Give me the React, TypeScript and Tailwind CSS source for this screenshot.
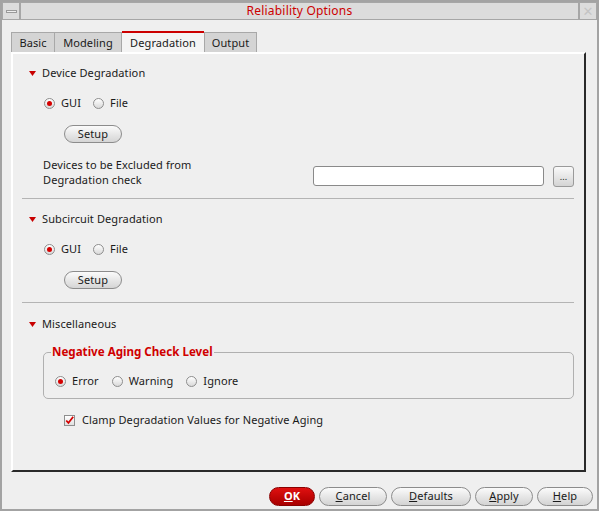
import type { ReactNode } from 'react';

const font = { fontFamily: '"Noto Sans", "DejaVu Sans", sans-serif' };

function Triangle() {
  return (
    <svg width="7" height="5" viewBox="0 0 7 5" className="shrink-0">
      <path d="M0 0 L7 0 L3.5 5 Z" fill="#c80000" />
    </svg>
  );
}

function Radio({ checked, label }: { checked?: boolean; label: string }) {
  return (
    <div className="flex items-center gap-[6px]">
      <div className="w-[11px] h-[11px] rounded-full border border-[#8e8e8e] bg-gradient-to-b from-white to-[#d9d9d9] flex items-center justify-center shrink-0">
        {checked && <div className="w-[5px] h-[5px] rounded-full bg-[#d40000]" />}
      </div>
      <span>{label}</span>
    </div>
  );
}

function Header({ label }: { label: string }) {
  return (
    <div className="h-[20px] flex items-center gap-[6px] pl-[16px]">
      <Triangle />
      <span>{label}</span>
    </div>
  );
}

function SetupButton() {
  return (
    <div className="h-[18px] pl-[51px] flex">
      <div className="w-[58px] h-[18px] rounded-full border border-[#8c8c8c] bg-gradient-to-b from-[#fbfbfb] to-[#d5d5d5] flex items-center justify-center">
        Setup
      </div>
    </div>
  );
}

function Separator() {
  return <div className="h-px ml-[9px] mr-[10px] bg-[#b4b4b4]" />;
}

function Btn({ w, children, red }: { w: string; children: ReactNode; red?: boolean }) {
  return (
    <div
      className={
        w +
        ' h-[19px] rounded-full flex items-center justify-center border ' +
        (red
          ? 'border-[#8a0000] bg-gradient-to-b from-[#e01010] to-[#a80000] text-white font-bold'
          : 'border-[#8c8c8c] bg-gradient-to-b from-[#fbfbfb] to-[#d3d3d3]')
      }
    >
      {children}
    </div>
  );
}

export default function App() {
  return (
    <div
      className="w-[599px] h-[511px] bg-[#efefef] border-2 border-[#a3a3a3] flex flex-col text-[11px] tracking-[0.1px] text-[#1a1a1a]"
      style={font}
    >
      {/* title bar */}
      <div className="h-[18px] flex">
        <div className="w-[18px] border border-[#a6a6a6] bg-[#dcdcdc] flex items-center justify-center">
          <div className="w-[11px] h-[3px] border border-[#9a9a9a] bg-[#eeeeee]" />
        </div>
        <div className="flex-1 border border-[#a6a6a6] bg-[#dcdcdc] flex items-center justify-center text-[12px] tracking-[0.2px] text-[#cc0000]">
          Reliability Options
        </div>
        <div className="w-[18px] border border-[#a6a6a6] bg-[#dcdcdc] flex items-center justify-center text-[13px] text-[#c4c4c4] leading-none">
          ✕
        </div>
      </div>

      {/* tabs */}
      <div className="mt-[11px] ml-[9px] h-[21px] flex items-end">
        <div className="w-[44px] h-[20px] pt-[2px] border border-b-0 border-[#a8a8a8] bg-[#d4d4d4] flex items-center justify-center">Basic</div>
        <div className="w-[67px] h-[20px] pt-[2px] border border-l-0 border-b-0 border-[#a8a8a8] bg-[#d4d4d4] flex items-center justify-center">Modeling</div>
        <div className="w-[82px] h-[21px] pt-[2px] border-t-2 border-[#cc0000] bg-[#f4f4f4] flex items-center justify-center">Degradation</div>
        <div className="w-[53px] h-[20px] pt-[2px] border border-b-0 border-[#a8a8a8] bg-[#d4d4d4] flex items-center justify-center">Output</div>
      </div>

      {/* panel */}
      <div className="ml-[9px] w-[575px] h-[420px] border-t-2 border-l-2 border-t-white border-l-white border-r-2 border-b-2 border-r-[#2a2a2a] border-b-[#2a2a2a] flex flex-col pt-[9px]">
        <Header label="Device Degradation" />
        <div className="mt-[10px] h-[20px] pl-[31px] flex items-center gap-[12px]">
          <Radio checked label="GUI" />
          <Radio label="File" />
        </div>
        <div className="mt-[12px]">
          <SetupButton />
        </div>
        <div className="mt-[14px] h-[30px] pl-[30px] pr-[10px] flex justify-between">
          <div className="leading-[15px]">
            <div>Devices to be Excluded from</div>
            <div>Degradation check</div>
          </div>
          <div className="flex gap-[9px] pt-[9px]">
            <div className="w-[231px] h-[20px] rounded-[3px] border border-[#8a8a8a] bg-white" />
            <div className="w-[21px] h-[21px] rounded-[3px] border border-[#9a9a9a] bg-gradient-to-b from-[#fafafa] to-[#d4d4d4] flex items-center justify-center text-[9px] leading-none">
              ...
            </div>
          </div>
        </div>
        <div className="mt-[11px]">
          <Separator />
        </div>

        <div className="mt-[10px]">
          <Header label="Subcircuit Degradation" />
        </div>
        <div className="mt-[10px] h-[20px] pl-[31px] flex items-center gap-[12px]">
          <Radio checked label="GUI" />
          <Radio label="File" />
        </div>
        <div className="mt-[12px]">
          <SetupButton />
        </div>
        <div className="mt-[13px]">
          <Separator />
        </div>

        <div className="mt-[11px]">
          <Header label="Miscellaneous" />
        </div>
        <fieldset className="mt-[10px] ml-[30px] mr-[10px] border border-[#b0b0b0] rounded-[5px] px-[7px] pb-[7px]">
          <legend className="px-[1px] text-[11.6px] leading-[16px] font-bold tracking-normal text-[#d00000]">
            Negative Aging Check Level
          </legend>
          <div className="mt-[11px] h-[20px] pl-[4px] flex items-center gap-[13px]">
            <Radio checked label="Error" />
            <Radio label="Warning" />
            <Radio label="Ignore" />
          </div>
        </fieldset>
        <div className="mt-[11px] h-[20px] pl-[51px] flex items-center gap-[7px]">
          <div className="w-[11px] h-[11px] border border-[#8e8e8e] bg-gradient-to-b from-white to-[#e0e0e0] flex items-center justify-center">
            <svg width="11" height="11" viewBox="0 0 11 11">
              <path d="M1.5 5.5 L4.2 8.5 L10 1" stroke="#d40000" strokeWidth="2.2" fill="none" />
            </svg>
          </div>
          <span>Clamp Degradation Values for Negative Aging</span>
        </div>
      </div>

      {/* buttons */}
      <div className="mt-[15px] flex justify-end gap-[4px] pr-[4px]">
        <Btn w="w-[46px]" red>
          <span className="underline">O</span>K
        </Btn>
        <Btn w="w-[68px]">
          <span className="underline">C</span>ancel
        </Btn>
        <Btn w="w-[80px]">
          <span className="underline">D</span>efaults
        </Btn>
        <Btn w="w-[58px]">
          <span className="underline">A</span>pply
        </Btn>
        <Btn w="w-[56px]">
          <span className="underline">H</span>elp
        </Btn>
      </div>
    </div>
  );
}
